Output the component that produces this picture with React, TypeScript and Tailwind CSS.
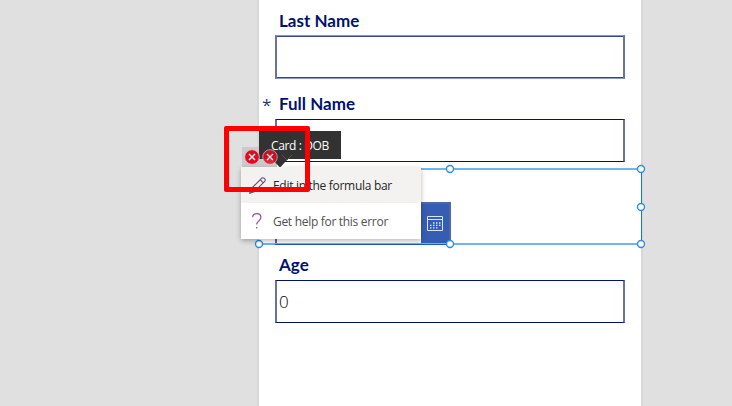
import type { ReactNode } from "react";

const labelClass =
  "h-6 pl-[4px] font-['Lato',sans-serif] text-[17px] leading-6 font-bold text-[#00126b] whitespace-nowrap";

function Label({ children }: { children: ReactNode }) {
  return <div className={labelClass}>{children}</div>;
}

function Handle({ className }: { className: string }) {
  return (
    <svg
      className={`absolute size-[10px] -translate-x-1/2 -translate-y-1/2 ${className}`}
      viewBox="0 0 10 10"
    >
      <circle cx="5" cy="5" r="3.5" fill="white" stroke="#2c8fdd" strokeWidth="1.4" />
    </svg>
  );
}

function ErrorBadge({ className = "" }: { className?: string }) {
  return (
    <svg className={`size-[16px] ${className}`} viewBox="0 0 16 16">
      <circle cx="8" cy="8" r="7.3" fill="#e00b24" stroke="#efc3c8" strokeWidth="0.8" />
      <path d="M5 5l6 6M11 5l-6 6" stroke="white" strokeWidth="1.4" />
    </svg>
  );
}

function DateField() {
  return (
    <section className="relative mt-[6px] h-[77px] w-[384px]">
      <div className="ml-[17px] flex h-full w-[176px] items-end">
        <div className="h-[42px] flex-1 border-l-2 border-[#5861a0]" />
        <div className="flex h-[43px] w-[30px] items-center justify-center border-t-2 border-r-2 border-[#5364a8] bg-[#355eb3]">
          <svg className="-mt-[2px]" width="16" height="15" viewBox="0 0 16 15" fill="none" stroke="#dbe4f7">
            <path d="M.5.5h15v14H.5zM1 3.5h14" />
            <path
              d="M6 7h1.5M9 7h1.5M12 7h1.5M3 9.4h1.5M6 9.4h1.5M9 9.4h1.5M12 9.4h1.5M3 11.8h1.5M6 11.8h1.5M9 11.8h1.5"
              strokeWidth="1.3"
            />
          </svg>
        </div>
      </div>
      <div className="absolute inset-y-0 right-0 left-[1px] border-t-[2px] border-b-[2px] border-t-[#70b5eb] border-b-[#70b5eb]" />
      <div className="absolute inset-y-0 right-0 w-px bg-[#1079d3]" />
      <div className="absolute bottom-0 left-[17px] h-px w-[176px] bg-[#1260b8]" />
      <Handle className="top-[1px] left-[1px]" />
      <Handle className="top-[1px] left-[192px]" />
      <Handle className="top-[1px] left-[383px]" />
      <Handle className="top-[39px] left-[383px]" />
      <Handle className="top-[76px] left-[383px]" />
      <Handle className="top-[76px] left-[192px]" />
      <Handle className="top-[76px] left-[1px]" />
    </section>
  );
}

function ErrorMenu() {
  return (
    <div className="absolute top-[167px] left-[241px] flex h-[72px] w-[180px] flex-col bg-white font-['Open_Sans',sans-serif] text-[12px] shadow-[0_2px_5px_rgba(0,0,0,0.28)]">
      <div className="flex h-9 items-center bg-[#f3f2f1] pl-[8px] text-[#262626]">
        <svg className="mr-2 size-[17px]" viewBox="0 0 16 16" fill="none" stroke="#6b4470" strokeWidth="1">
          <path d="M.7 15.3l1.2-4.1L11.8 1.2c1.8-1.5 4.4 1 3 2.9L4.8 14zM1.9 11.2l2.9 2.8M10.5 2.5l3 3" />
        </svg>
        <span className="-ml-px pt-[2px] tracking-[-0.3px] whitespace-nowrap">Edit in the formula bar</span>
      </div>
      <div className="flex h-9 items-center pl-[8px] text-[#505050]">
        <svg className="mr-2 size-4" viewBox="0 0 16 16" fill="none" stroke="#8a4f93" strokeWidth="1.2">
          <path d="M3.7 4.2C3.7 1.7 5.4.6 7.7.6c2.5 0 4.2 1.4 4.2 3.7 0 3.5-4.2 3.6-4.2 7.3M7.7 14v1.5" />
        </svg>
        <span className="pt-[2px] tracking-[-0.3px] whitespace-nowrap">Get help for this error</span>
      </div>
    </div>
  );
}

export default function App() {
  return (
    <main className="relative flex h-[406px] w-[732px] overflow-hidden bg-[#e0e0e0]">
      <div className="ml-[257px] h-full w-[386px] border-x-2 border-[#d8d8d8] bg-white">
        <div className="-ml-px flex flex-col pt-[9px]">
          <section className="ml-[17px] w-[350px]">
            <Label>Last Name</Label>
            <div className="mt-[2px] h-[44px] border-x-2 border-y border-x-[#6870a8] border-y-[#8d96c3]">
              <div className="h-full border-y border-[#35468d]" />
            </div>
          </section>
          <section className="mt-[13px] ml-[17px] w-[350px]">
            <div className="flex">
              <span className="-ml-[13px] h-6 w-[13px] font-['Open_Sans',sans-serif] text-[17px] leading-[26px] text-[#263c70]">
                *
              </span>
              <Label>Full Name</Label>
            </div>
            <div className="mt-[3px] h-[43px] border-x-2 border-y border-x-[#6870a8] border-y-[#00126b]" />
          </section>
          <DateField />
          <section className="mt-[8px] ml-[17px] w-[350px]">
            <Label>Age</Label>
            <div className="mt-[3px] flex h-[43px] items-center border-x-2 border-y border-x-[#6870a8] border-y-[#00126b] pl-[2px] font-['Open_Sans',sans-serif] text-[17px] font-light text-black">
              0
            </div>
          </section>
        </div>
      </div>
      <div className="absolute top-[147px] left-[242px] h-5 w-[35px] bg-[#cbcbcb]" />
      <div className="absolute top-[131px] left-[259px] h-7 w-[82px] bg-[#323232] pl-[12px] font-['Open_Sans',sans-serif] text-[12px] leading-[30px] tracking-[-0.38px] whitespace-nowrap text-white">
        Card : DOB
      </div>
      <svg className="absolute top-[150px] left-[268px] h-[18px] w-[28px]" viewBox="0 0 28 18" fill="none">
        <path d="M3 8h18L12 17.5z" fill="#323232" />
        <path d="M14 5l5 5 5-5" stroke="#555" />
      </svg>
      <div className="absolute top-[149px] left-[244px] flex gap-[2px]">
        <ErrorBadge />
        <ErrorBadge className="opacity-85" />
      </div>
      <ErrorMenu />
      <div className="absolute top-[126px] left-[224px] h-[66px] w-[86px] rounded-[2px] border-[5px] border-[#ff0000]" />
    </main>
  );
}
